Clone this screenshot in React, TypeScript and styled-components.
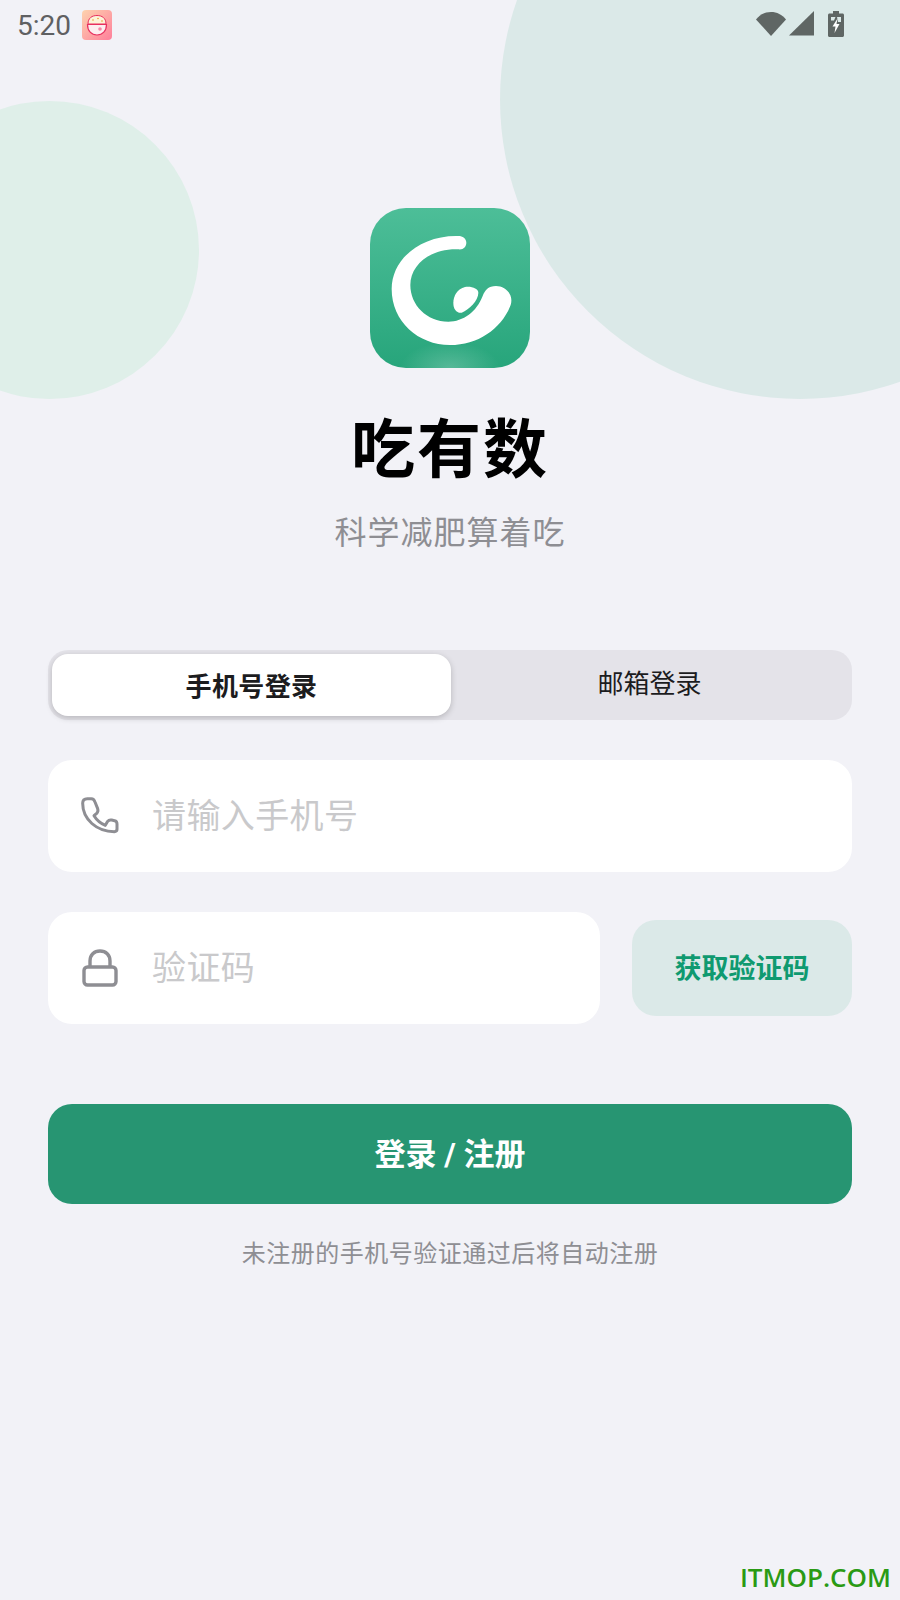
import React from 'react';
import styled, { createGlobalStyle } from 'styled-components';

const CJK = `"Noto Sans CJK SC", "Noto Sans", sans-serif`;

const GlobalStyle = createGlobalStyle`
  html, body {
    margin: 0;
    padding: 0;
    background: #f2f2f7;
  }
  * {
    box-sizing: border-box;
  }
`;

const Page = styled.div`
  position: relative;
  width: 900px;
  height: 1600px;
  overflow: hidden;
  background: #f2f2f7;
  font-family: ${CJK};
`;

const BlobRight = styled.div`
  position: absolute;
  left: 500px;
  top: -200px;
  width: 600px;
  height: 599px;
  border-radius: 50%;
  background: #dbe9e8;
`;

const BlobLeft = styled.div`
  position: absolute;
  left: -100px;
  top: 101px;
  width: 299px;
  height: 298px;
  border-radius: 50%;
  background: #dfefe9;
`;

const Content = styled.div`
  position: relative;
  display: flex;
  flex-direction: column;
`;

const StatusBar = styled.div`
  display: flex;
  align-items: center;
  height: 50px;
  padding: 0 56px 0 17px;
`;

const Time = styled.span`
  font-family: Roboto, sans-serif;
  font-size: 28px;
  color: #5f6062;
  width: 65px;
`;

const StatusRight = styled.div`
  display: flex;
  align-items: center;
  gap: 3px;
  margin-left: auto;
  margin-bottom: 3px;
`;

const Hero = styled.div`
  display: flex;
  flex-direction: column;
  align-items: center;
  padding-top: 158px;
`;

const LogoBox = styled.div`
  width: 160px;
  height: 160px;
  border-radius: 36px;
  overflow: hidden;
  background:
    radial-gradient(ellipse 50px 26px at 50% 100%, rgba(255, 255, 255, 0.22), rgba(255, 255, 255, 0)),
    linear-gradient(180deg, #4dbe98 0%, #27a57b 100%);
`;

const Title = styled.h1`
  margin: 30px 0 0;
  font-size: 64px;
  line-height: 92px;
  font-weight: 700;
  letter-spacing: 2px;
  color: #000;
`;

const Subtitle = styled.div`
  margin-top: 17px;
  font-size: 32px;
  line-height: 46px;
  letter-spacing: 1px;
  color: #8e8e93;
`;

const Form = styled.div`
  display: flex;
  flex-direction: column;
  padding: 0 48px;
  margin-top: 97px;
`;

const Tabs = styled.div`
  display: grid;
  grid-template-columns: 399px 1fr;
  height: 70px;
  padding: 4px;
  border-radius: 20px;
  background: #e4e3e9;
`;

const Tab = styled.div<{ $active?: boolean }>`
  display: flex;
  align-items: center;
  justify-content: center;
  font-size: 26px;
  color: #1c1c1e;
  border-radius: 16px;
  font-weight: ${props => (props.$active ? 700 : 400)};
  letter-spacing: ${props => (props.$active ? '0.4px' : '0')};
  background: ${props => (props.$active ? '#fff' : 'transparent')};
  box-shadow: ${props => (props.$active ? '0 2px 6px rgba(0, 0, 0, 0.2)' : 'none')};
  padding-bottom: ${props => (props.$active ? '2px' : '8px')};
`;

const InputBox = styled.div`
  display: flex;
  align-items: center;
  flex: 1;
  height: 112px;
  padding: 0 32px;
  border-radius: 24px;
  background: #fff;
`;

const PhoneField = styled(InputBox)`
  flex: none;
  margin-top: 40px;
`;

const IconSlot = styled.div`
  display: flex;
  justify-content: center;
  width: 40px;
  margin-right: 32px;
`;

const Placeholder = styled.span`
  font-size: 34px;
  letter-spacing: 0.4px;
  color: #c9c9cb;
  padding-bottom: 5px;
`;

const CodeRow = styled.div`
  display: flex;
  align-items: center;
  gap: 32px;
  margin-top: 40px;
`;

const CodeButton = styled.button`
  width: 220px;
  height: 96px;
  border: 0;
  padding: 0 0 4px;
  border-radius: 24px;
  background: #dbe9e8;
  color: #0f9a70;
  font-family: ${CJK};
  font-size: 27px;
  font-weight: 700;
`;

const LoginButton = styled.button`
  height: 100px;
  margin-top: 80px;
  border: 0;
  padding: 0 0 5px;
  border-radius: 24px;
  background: #279572;
  color: #fff;
  font-family: Roboto, ${CJK};
  font-size: 31px;
  font-weight: 700;
`;

const Note = styled.div`
  margin-top: 29px;
  text-align: center;
  font-size: 24px;
  line-height: 38px;
  letter-spacing: 0.5px;
  color: #8e8e93;
`;

const Watermark = styled.div`
  position: absolute;
  right: 9px;
  bottom: 5px;
  font-family: "Open Sans", sans-serif;
  font-size: 26px;
  font-weight: 600;
  color: #2a9a14;
`;

const RiceIcon = () => (
  <svg width="30" height="30" viewBox="0 0 30 30">
    <defs>
      <linearGradient id="riceBg" x1="0" y1="0" x2="1" y2="1">
        <stop offset="0" stopColor="#fdd3ae" />
        <stop offset="1" stopColor="#fe7f9b" />
      </linearGradient>
    </defs>
    <rect width="30" height="30" rx="4" fill="url(#riceBg)" />
    <path d="M6 14C6 8 10 5.500 15 5.500S24 8 24 14Z" fill="#fdf3d8" stroke="#e8305f" strokeWidth="1" />
    <path d="M5.500 14.500H24.500C24.500 21 20.500 25 15 25S5.500 21 5.500 14.500Z" fill="#fdeef0" stroke="#e8305f" strokeWidth="1.200" />
    <circle cx="11" cy="10" r="0.800" fill="#e8a030" />
    <circle cx="16" cy="8.500" r="0.800" fill="#e8a030" />
    <circle cx="20" cy="11" r="0.800" fill="#e8a030" />
    <circle cx="18" cy="19" r="1.800" fill="#f58aa5" />
  </svg>
);

const WifiIcon = () => (
  <svg width="30" height="25" viewBox="0 0 30 25">
    <path d="M0 8.500C4 3.500 9 1 15 1S26 3.500 30 8.500L15 25Z" fill="#5f6664" />
  </svg>
);

const SignalIcon = () => (
  <svg width="25" height="25" viewBox="0 0 25 25">
    <path d="M25 0V24.500H0Z" fill="#5f6664" />
  </svg>
);

const BatteryIcon = () => (
  <svg width="16" height="26" viewBox="0 0 16 26" style={{ marginLeft: 11 }}>
    <path d="M5 0H11V2.500H14.500C15.300 2.500 16 3.200 16 4V24.500C16 25.300 15.300 26 14.500 26H1.500C0.700 26 0 25.300 0 24.500V4C0 3.200 0.700 2.500 1.500 2.500H5Z" fill="#5f6664" />
    <path d="M3 6H7.500L6 9.500H3ZM9 6H13V11L10 11Z" fill="#dbe9e8" />
    <path d="M9.500 7.500L4.500 15.500H7.500L6.500 22L11.500 13H8.500Z" fill="#fff" />
  </svg>
);

const LogoMark = () => (
  <svg width="160" height="160" viewBox="60 54 480 480">
    <path
      d="M325 138C215 135 125 205 125 297C125 395 205 465 300 465C385 465 455 415 482 345C492 312 465 288 438 288C415 288 405 300 398 318C380 365 340 395 295 395C230 395 181 345 181 285C181 225 240 175 325 178C340 180 349 170 349 158C349 146 338 138 325 138Z"
      fill="#fff"
    />
    <path
      d="M345 291C322 296 310 318 310 338C310 358 320 370 335 368C358 358 385 332 385 308C385 296 365 288 345 291Z"
      fill="#fff"
    />
  </svg>
);

const PhoneIcon = () => (
  <svg width="38" height="38" viewBox="153 503 114 114" fill="none">
    <path
      d="M172 508H184C190 508 193 512 195 518L203 538C205 544 204 548 200 552L192 559C200 572 212 582 226 588L233 576C236 572 240 571 245 572L254 574C259 575 261 579 261 584V600C261 605 258 607 253 607C200 607 158 570 158 522C158 513 163 508 172 508Z"
      stroke="#8e8e93"
      strokeWidth="9"
      strokeLinejoin="round"
    />
  </svg>
);

const LockIcon = () => (
  <svg width="36" height="38" viewBox="0 0 36 38" fill="none" stroke="#8e8e93" strokeWidth="3.400">
    <rect x="2" y="18" width="32" height="18" rx="3.500" />
    <path d="M8 18V12C8 6 12 2 18 2S28 6 28 12V18" />
  </svg>
);

const App = () => {
  return (
    <Page>
      <GlobalStyle />
      <BlobRight />
      <BlobLeft />
      <Content>
        <StatusBar>
          <Time>5:20</Time>
          <RiceIcon />
          <StatusRight>
            <WifiIcon />
            <SignalIcon />
            <BatteryIcon />
          </StatusRight>
        </StatusBar>
        <Hero>
          <LogoBox>
            <LogoMark />
          </LogoBox>
          <Title>吃有数</Title>
          <Subtitle>科学减肥算着吃</Subtitle>
        </Hero>
        <Form>
          <Tabs>
            <Tab $active>手机号登录</Tab>
            <Tab>邮箱登录</Tab>
          </Tabs>
          <PhoneField>
            <IconSlot>
              <PhoneIcon />
            </IconSlot>
            <Placeholder>请输入手机号</Placeholder>
          </PhoneField>
          <CodeRow>
            <InputBox>
              <IconSlot>
                <LockIcon />
              </IconSlot>
              <Placeholder>验证码</Placeholder>
            </InputBox>
            <CodeButton>获取验证码</CodeButton>
          </CodeRow>
          <LoginButton>登录 / 注册</LoginButton>
          <Note>未注册的手机号验证通过后将自动注册</Note>
        </Form>
      </Content>
      <Watermark>ITMOP.COM</Watermark>
    </Page>
  );
};

export default App;
